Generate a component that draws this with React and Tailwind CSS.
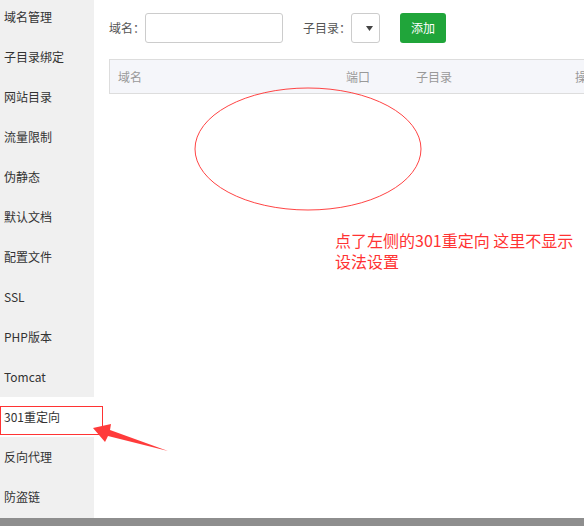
const menu = ['域名管理', '子目录绑定', '网站目录', '流量限制', '伪静态', '默认文档', '配置文件', 'SSL', 'PHP版本', 'Tomcat', '301重定向', '反向代理', '防盗链'];

export default function App() {
  return (
    <div className="relative w-[584px] h-[526px] overflow-hidden bg-white text-[#333] font-['Microsoft_YaHei','Noto_Sans_CJK_SC',sans-serif]">
      <div className="flex h-[518px]">
        <aside className="w-[94px] shrink-0 bg-[#f0f0f0] overflow-hidden">
          <ul className="-mt-[3px]">
            {menu.map((m, i) => (
              <li key={m} className={`h-10 flex items-center pl-1 text-[12px] ${i === 10 ? 'bg-white' : ''}`}>{m}</li>
            ))}
          </ul>
        </aside>

        <main className="flex-1 min-w-0 pl-[15px] pt-[13px] overflow-hidden">
          <div className="flex items-center text-[12px] text-[#555]">
            <span>域名：</span>
            <input className="w-[138px] h-[30px] border border-[#ccc] rounded-[3px] outline-none px-2" />
            <span className="ml-[20px]">子目录：</span>
            <div className="w-[29px] h-[30px] border border-[#ccc] rounded-[3px] flex items-center justify-end pr-[6px]">
              <svg width="7" height="5" viewBox="0 0 7 5"><path d="M0 0h7L3.5 5z" fill="#444" /></svg>
            </div>
            <button className="ml-[20px] w-[46px] h-[30px] bg-[#20a53a] text-white text-[12px] rounded-[3px]">添加</button>
          </div>

          <div className="mt-[16px] w-[620px] h-[35px] bg-[#f5f6fa] border border-[#ddd] flex items-center px-[8px] text-[12px] text-[#999]">
            <span className="w-[228px]">域名</span>
            <span className="w-[70px]">端口</span>
            <span className="w-[159px]">子目录</span>
            <span>操作</span>
          </div>
        </main>
      </div>
      <div className="h-2 bg-[#8e8e8e]" />

      {/* annotations */}
      <div className="absolute left-0 top-[406px] w-[103px] h-[29px] border border-[#ff3333]" />
      <svg className="absolute left-0 top-0 pointer-events-none" width="584" height="526">
        <ellipse cx="308" cy="149" rx="113" ry="61" fill="none" stroke="#ff4444" strokeWidth="1" />
        <polygon points="93,428 111,424 110,430 168,451 108,436 105,442" fill="#ff3b3b" />
      </svg>
      <p className="absolute left-[335px] top-[230px] text-[16px] leading-[21px] text-[#ff3333]">
        点了左侧的301重定向 这里不显示<br />设法设置
      </p>
    </div>
  );
}
